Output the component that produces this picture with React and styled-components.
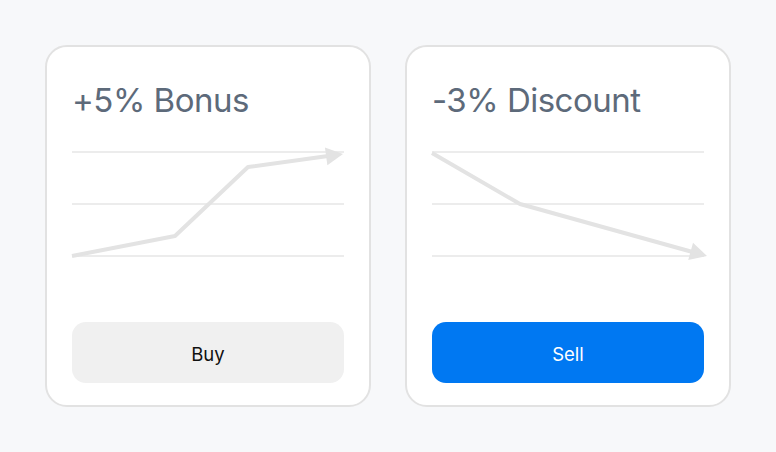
import React from 'react';
import styled, { createGlobalStyle } from 'styled-components';

const GlobalStyle = createGlobalStyle`
  html, body {
    margin: 0;
    padding: 0;
    background: #f7f8fa;
    font-family: Inter, "Noto Sans", sans-serif;
  }
`;

const Page = styled.div`
  display: flex;
  gap: 34px;
  padding: 45px;
  width: 776px;
  height: 452px;
  box-sizing: border-box;
`;

const Card = styled.div`
  flex: 1;
  display: flex;
  flex-direction: column;
  box-sizing: border-box;
  background: #fff;
  border: 2px solid #e2e2e2;
  border-radius: 22px;
  padding: 37px 25px 22px;
`;

const Title = styled.h2`
  margin: 0;
  font-size: 33px;
  font-weight: 400;
  line-height: 1;
  color: #5d6a7a;
  letter-spacing: -0.5px;
`;

const ChartBox = styled.svg`
  display: block;
  margin-top: 23px;
  overflow: visible;
`;

const ActionButton = styled.button`
  margin-top: auto;
  height: 61px;
  padding: 2px 0 0;
  border: 0;
  border-radius: 14px;
  font-family: Inter, "Noto Sans", sans-serif;
  font-size: 18.5px;
  background: ${(p) => (p.$primary ? '#0078f2' : '#f0f0f0')};
  color: ${(p) => (p.$primary ? '#fff' : '#111')};
  cursor: pointer;
`;

const W = 272;
const H = 130;
const GRID = [12, 64, 116];

const TrendChart = ({ points }) => {
  const n = points.length;
  const [x1, y1] = points[n - 2];
  const [tx, ty] = points[n - 1];
  const dx = tx - x1;
  const dy = ty - y1;
  const len = Math.hypot(dx, dy);
  const ux = dx / len;
  const uy = dy / len;
  const headLen = 17;
  const headHalf = 9;
  const bx = tx - ux * headLen;
  const by = ty - uy * headLen;
  const px = -uy * headHalf;
  const py = ux * headHalf;
  const line = [...points.slice(0, -1), [bx + ux * 2, by + uy * 2]]
    .map((p) => p.join(','))
    .join(' ');

  return (
    <ChartBox width={W} height={H} viewBox={`0 0 ${W} ${H}`}>
      {GRID.map((y) => (
        <line key={y} x1="0" x2={W} y1={y} y2={y} stroke="#ececec" strokeWidth="2" />
      ))}
      <polyline points={line} fill="none" stroke="#e3e3e3" strokeWidth="4" strokeLinejoin="round" />
      <polygon
        points={`${tx},${ty} ${bx + px},${by + py} ${bx - px},${by - py}`}
        fill="#e3e3e3"
      />
    </ChartBox>
  );
};

const cards = [
  {
    title: '+5% Bonus',
    points: [[0, 116], [103, 96], [176, 27], [271, 14]],
    action: 'Buy',
  },
  {
    title: '-3% Discount',
    points: [[0, 13], [88, 64], [275, 116]],
    action: 'Sell',
    primary: true,
  },
];

export default function App() {
  return (
    <>
      <GlobalStyle />
      <Page>
        {cards.map((c) => (
          <Card key={c.title}>
            <Title>{c.title}</Title>
            <TrendChart points={c.points} />
            <ActionButton $primary={c.primary}>{c.action}</ActionButton>
          </Card>
        ))}
      </Page>
    </>
  );
}
